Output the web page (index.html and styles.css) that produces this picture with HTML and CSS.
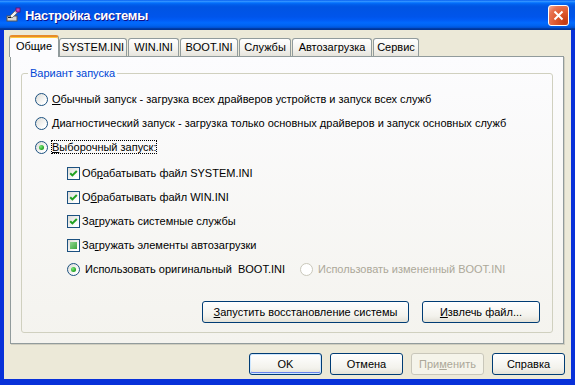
FILE: index.html
```html
<!DOCTYPE html>
<html lang="ru">
<head>
    <meta charset="UTF-8">
    <title>Настройка системы</title>
    <link rel="stylesheet" href="styles.css">
</head>
<body>
    <div class="window">
        <div class="titlebar">
            <svg class="app-icon" width="16" height="16" viewBox="0 0 16 16">
                <rect x="1" y="9" width="10" height="5" fill="#d8d8d8" stroke="#555" stroke-width="1"/>
                <rect x="2" y="10" width="3" height="1" fill="#222"/>
                <path d="M4 9 L10 3 L12 5 L6 11 Z" fill="#f2f2f2" stroke="#666" stroke-width="0.8"/>
                <rect x="10" y="1" width="4" height="4" fill="#c040c0" stroke="#601060" stroke-width="0.8"/>
            </svg>
            <span class="title">Настройка системы</span>
            <div class="close-btn">
                <svg width="13" height="13" viewBox="0 0 13 13">
                    <path d="M2.5 2.5 L10.5 10.5 M10.5 2.5 L2.5 10.5" stroke="#fff" stroke-width="2"/>
                </svg>
            </div>
        </div>
        <div class="client">
            <div class="tabs">
                <div class="tab active">Общие</div>
                <div class="tab">SYSTEM.INI</div>
                <div class="tab">WIN.INI</div>
                <div class="tab">BOOT.INI</div>
                <div class="tab">Службы</div>
                <div class="tab">Автозагрузка</div>
                <div class="tab">Сервис</div>
            </div>
            <div class="panel">
                <fieldset class="group">
                    <legend>Вариант запуска</legend>
                    <div class="options">
                        <div class="option">
                            <span class="radio"></span>
                            <span><u>О</u>бычный запуск - загрузка всех драйверов устройств и запуск всех служб</span>
                        </div>
                        <div class="option">
                            <span class="radio"></span>
                            <span><u>Д</u>иагностический запуск - загрузка только основных драйверов и запуск основных служб</span>
                        </div>
                        <div class="option">
                            <span class="radio checked"></span>
                            <span class="focused"><u>В</u>ыборочный запуск:</span>
                        </div>
                        <div class="sub-options">
                            <div class="option">
                                <span class="check"><svg width="11" height="11" viewBox="0 0 11 11"><path d="M2.2 5.2 L4.4 7.4 L8.8 3" fill="none" stroke="#21a121" stroke-width="2"/></svg></span>
                                <span>Об<u>р</u>абатывать файл SYSTEM.INI</span>
                            </div>
                            <div class="option">
                                <span class="check"><svg width="11" height="11" viewBox="0 0 11 11"><path d="M2.2 5.2 L4.4 7.4 L8.8 3" fill="none" stroke="#21a121" stroke-width="2"/></svg></span>
                                <span>О<u>б</u>рабатывать файл WIN.INI</span>
                            </div>
                            <div class="option">
                                <span class="check"><svg width="11" height="11" viewBox="0 0 11 11"><path d="M2.2 5.2 L4.4 7.4 L8.8 3" fill="none" stroke="#21a121" stroke-width="2"/></svg></span>
                                <span>За<u>г</u>ружать системные службы</span>
                            </div>
                            <div class="option">
                                <span class="check mixed"></span>
                                <span>За<u>г</u>ружать элементы автозагрузки</span>
                            </div>
                            <div class="option">
                                <div class="boot-choice">
                                    <span class="radio checked"></span>
                                    <span>Использовать оригинальный&nbsp; BOOT.INI</span>
                                </div>
                                <div class="boot-choice disabled">
                                    <span class="radio"></span>
                                    <span>Использовать измененный BOOT.INI</span>
                                </div>
                            </div>
                        </div>
                    </div>
                    <div class="actions">
                        <button class="btn restore-btn"><u>З</u>апустить восстановление системы</button>
                        <button class="btn extract-btn"><u>И</u>звлечь файл...</button>
                    </div>
                </fieldset>
            </div>
            <div class="dialog-buttons">
                <button class="btn default">OK</button>
                <button class="btn">Отмена</button>
                <button class="btn" disabled>При<u>м</u>енить</button>
                <button class="btn">Справка</button>
            </div>
        </div>
    </div>
</body>
</html>
```

FILE: styles.css
```css
body {
    margin: 0;
    padding: 0;
    background: #ece9d8;
}
.window {
    width: 575px;
    height: 385px;
    box-sizing: border-box;
    display: flex;
    flex-direction: column;
    background: #0831d9;
    padding: 0 4px 6px 4px;
    font-family: "Liberation Sans", "DejaVu Sans", sans-serif;
    font-size: 11px;
    color: #000;
}
.titlebar {
    height: 30px;
    margin: 0 -4px;
    padding: 0 6px 0 6px;
    display: flex;
    align-items: center;
    background: linear-gradient(to bottom, #0058ee 0%, #3593ff 4%, #288eff 6%, #127dff 8%, #036ffc 10%, #0262ee 14%, #0057e5 20%, #0054e3 24%, #0055eb 56%, #005bf5 66%, #026afe 76%, #0062ef 86%, #0052d6 92%, #0040ab 94%, #003092 100%);
}
.app-icon {
    flex: none;
    margin-right: 3px;
}
.title {
    color: #fff;
    font-weight: bold;
    font-size: 13px;
    text-shadow: 1px 1px #0f1089;
    letter-spacing: -0.3px;
}
.close-btn {
    margin-left: auto;
    width: 21px;
    height: 21px;
    box-sizing: border-box;
    border: 1px solid #fff;
    border-radius: 3px;
    background: radial-gradient(circle at 85% 85%, #c23a12 0%, #de5a30 45%, #e87352 75%, #f6b39e 100%);
    display: flex;
    align-items: center;
    justify-content: center;
}
.client {
    flex: 1;
    background: #ece9d8;
    padding: 5px 7px 4px 6px;
    display: flex;
    flex-direction: column;
}
.tabs {
    display: flex;
    align-items: flex-end;
    height: 21px;
    margin-left: -1px;
    position: relative;
    z-index: 1;
}
.tab {
    height: 18px;
    box-sizing: border-box;
    padding: 0;
    margin-right: 1px;
    text-align: center;
    line-height: 16px;
    border: 1px solid #919b9c;
    border-bottom: none;
    border-radius: 3px 3px 0 0;
    background: linear-gradient(to bottom, #ffffff, #f3f2ee 60%, #e6e4dc);
    white-space: nowrap;
}
.tab:nth-child(1) { width: 50px; }
.tab:nth-child(2) { width: 68px; }
.tab:nth-child(3) { width: 51px; }
.tab:nth-child(4) { width: 58px; }
.tab:nth-child(5) { width: 52px; }
.tab:nth-child(6) { width: 80px; }
.tab:nth-child(7) { width: 46px; }
.tab.active {
    height: 22px;
    margin-bottom: -1px;
    margin-right: 0;
    line-height: 18px;
    background: #fcfcfe;
    border-top: 2px solid #e68b2c;
    box-shadow: inset 0 1px 0 #ffc83c;
}
.panel {
    height: 288px;
    box-sizing: border-box;
    border: 1px solid #919b9c;
    background: linear-gradient(to bottom, #fcfcfe, #f4f3ee);
    box-shadow: 1px 1px 0 #d0cec0;
    display: flex;
    flex-direction: column;
}
.group {
    flex: 1;
    margin: 10px;
    padding: 0;
    border: 1px solid #d0d0bf;
    border-radius: 3px;
    min-width: 0;
}
.group legend {
    margin-left: 6px;
    padding: 0 2px;
    color: #0046d5;
    line-height: 13px;
}
.options {
    padding-top: 7px;
}
.option {
    height: 24px;
    display: flex;
    align-items: center;
    padding-left: 13px;
    white-space: nowrap;
}
.sub-options {
    margin-top: 2px;
}
.sub-options .option {
    padding-left: 45px;
}
.radio {
    flex: none;
    width: 13px;
    height: 13px;
    box-sizing: border-box;
    border: 1px solid #1c5180;
    border-radius: 50%;
    background: linear-gradient(135deg, #dcdcd7, #ffffff 80%);
    margin-right: 4px;
    display: flex;
    align-items: center;
    justify-content: center;
}
.radio.checked::after {
    content: "";
    width: 5px;
    height: 5px;
    border-radius: 50%;
    background: radial-gradient(circle at 35% 35%, #7ae87a, #21a121 70%);
}
.check {
    flex: none;
    width: 13px;
    height: 13px;
    box-sizing: border-box;
    border: 1px solid #1c5180;
    background: linear-gradient(135deg, #dcdcd7, #ffffff 80%);
    margin-right: 2px;
    display: flex;
    align-items: center;
    justify-content: center;
}
.check.mixed::after {
    content: "";
    width: 7px;
    height: 7px;
    background: linear-gradient(135deg, #8fd68f, #3ea73e);
}
.focused {
    outline: 1px dotted #000;
    outline-offset: 0;
}
.boot-choice {
    display: flex;
    align-items: center;
}
.boot-choice:first-child {
    width: 233px;
}
.boot-choice .radio {
    margin-right: 5px;
}
.boot-choice.disabled {
    color: #aca899;
}
.boot-choice.disabled .radio {
    border-color: #cac8bb;
    background: #fff;
}
.actions {
    margin-top: 20px;
    display: flex;
    justify-content: flex-end;
    gap: 13px;
    padding: 0 12px 0 0;
}
.btn {
    height: 22px;
    box-sizing: border-box;
    border: 1px solid #003c74;
    border-radius: 3px;
    background: linear-gradient(to bottom, #ffffff, #f3f2ec 70%, #e3e1d7);
    font-family: inherit;
    font-size: 11px;
    color: #000;
    padding: 0;
    white-space: nowrap;
}
.restore-btn {
    width: 207px;
}
.extract-btn {
    width: 118px;
}
.dialog-buttons {
    margin-top: 9px;
    margin-right: -1px;
    display: flex;
    justify-content: flex-end;
    gap: 8px;
}
.dialog-buttons .btn {
    width: 73px;
}
.btn.default {
    box-shadow: inset 0 0 0 1px #cee7ff, inset 0 -1px 0 1px #6982ee;
}
.btn:disabled {
    border-color: #c9c7ba;
    background: #f5f4ea;
    color: #aca899;
}
```
